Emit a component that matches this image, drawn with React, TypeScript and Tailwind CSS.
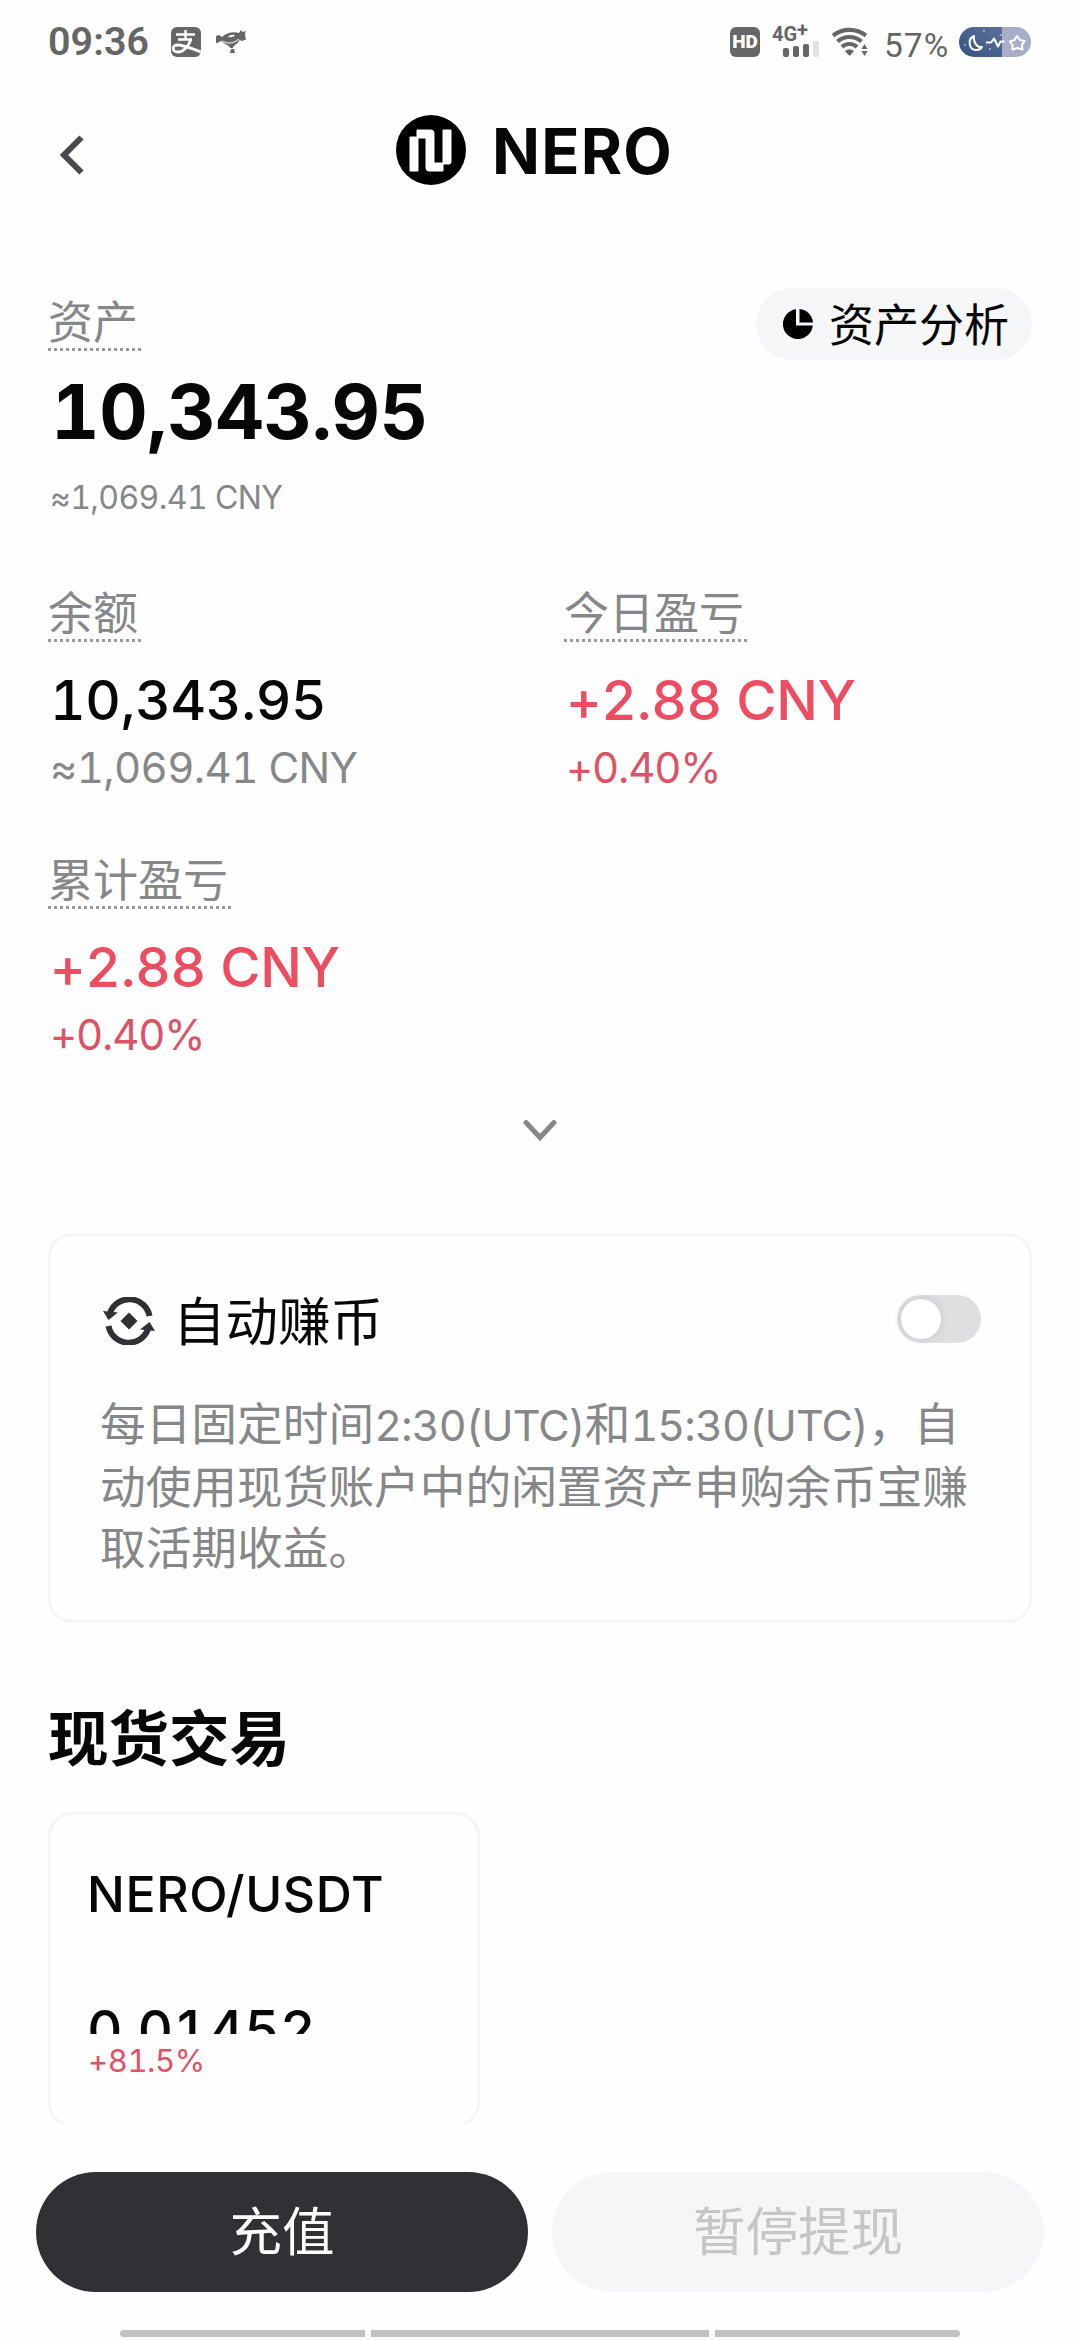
import { ReactNode } from 'react';

const statusGray = '#666666';

const AlipayIcon = () => (
    <svg width="30" height="30" viewBox="0 0 30 30">
        <rect width="30" height="30" rx="6" fill={statusGray} />
        <g stroke="#fff" strokeWidth="2.400" fill="none">
            <path d="M5 7.500h19M14.500 3v9.500M7 12.500h14" />
            <path d="M20 12.500C17.500 19 12.500 25 7 25c-6 0-6.500-7-.5-7 6 0 13 3 23.500 7" strokeWidth="2.800" />
        </g>
    </svg>
);

const BirdIcon = () => (
    <svg width="30" height="24" viewBox="0 0 30 24" fill={statusGray}>
        <path d="M0 6l3-1 3 2c4-4 11-6 17-4l2-3 1.500 2 3-1-.5 4 1 4.500-4 1.500-2.500-1c-1 2.500-3 4-5 5.500l-2 2.500h-2l-2.500-2.500c-3-1.500-5-3-6.500-5l-2 1.500-4 1.500-1.500-3z" />
        <path d="M15 19h3l1 4h-5z" />
        <path d="M12 7c2-2 4-2.500 7-2-1 2-4 2.500-7 2z" fill="#fff" />
        <path d="M7 11c5 3.500 11 2.500 16-2" fill="none" stroke="#fff" />
    </svg>
);

const WifiIcon = () => (
    <svg width="36" height="30" viewBox="0 0 36 30" fill="none" stroke={statusGray} strokeWidth="4.200">
        <path d="M1 8.500C11 1 24 1 34 8.500" />
        <path d="M5.500 14.500c7-6 17-6 24 0" />
        <path d="M10 20c4-4 11-4 15 0" />
        <path d="M13 24q4.500-3.500 9 0L17.500 29z" fill={statusGray} stroke="none" />
        <path d="M29.500 22l3-5 3 5zM29.500 24h6l-3 5z" fill={statusGray} stroke="none" />
    </svg>
);

const BatteryPill = () => (
    <svg width="72" height="30" viewBox="0 0 72 30">
        <defs>
            <linearGradient id="charged" x1="0" y1="1" x2="1" y2="0">
                <stop offset="0" stopColor="#34557f" />
                <stop offset="1" stopColor="#5f6f9b" />
            </linearGradient>
            <clipPath id="pill">
                <rect width="72" height="30" rx="15" />
            </clipPath>
        </defs>
        <g clipPath="url(#pill)">
            <rect width="43" height="30" fill="url(#charged)" />
            <rect x="43" width="29" height="30" fill="#a9aec8" />
        </g>
        <g fill="#a9bbd6">
            <circle cx="6" cy="18" r="1" />
            <circle cx="25" cy="4" r="1" />
            <circle cx="31" cy="22" r="1" />
            <circle cx="42" cy="8" r="1" />
            <circle cx="48" cy="26" r="1" />
        </g>
        <g stroke="#fff" strokeWidth="2" fill="none" strokeLinejoin="round">
            <path d="M15 9c-7 3-5 14 2 14 3 0 5-1 6-3-5 1-9-5-8-11z" />
            <path d="M27 15.500h5l3-4 4 8 2.500-5h4" />
            <path d="M58 9l3 4 4.500 1-2.500 4 .5 4.500-5-1.500-5 1.500v-4.500l-2.500-3.500 4.500-1.500z" />
        </g>
    </svg>
);

const NeroLogo = () => (
    <svg width="70" height="70" viewBox="0 0 70 70">
        <circle cx="35" cy="35" r="35" fill="#000" />
        <path
            d="M14 22h7v-7h14q3 0 3 3v30h9V15h8v32q0 2-2 2h-6v7H33q-3 0-3-3V23h-8v33h-8z"
            fill="#fff"
            stroke="#fff"
            strokeLinejoin="round"
        />
    </svg>
);

const PieIcon = () => (
    <svg width="30" height="30" viewBox="0 0 30 30" fill="#000">
        <path d="M13 .2V16.500h16.800A15 15 0 1 1 13 .2z" />
        <path d="M16.500 0A15 15 0 0 1 30 13.500H16.500z" />
    </svg>
);

const AutoEarnIcon = () => (
    <svg width="52" height="48" viewBox="0 0 52 48">
        <g fill="none" stroke="#303135" strokeWidth="6">
            <path d="M46.500 19A20.500 20.500 0 0 0 7 16" />
            <path d="M5.500 29A20.500 20.500 0 0 0 45 32" />
        </g>
        <path d="M0 14l15 1.500L5.500 23zM52 34l-15-1.500L46.500 25z" fill="#303135" />
        <path d="M26 15.500l8.500 8.500-8.500 8.500-8.500-8.500z" fill="#303135" />
    </svg>
);

const StatusBar = () => (
    <div className="flex h-[84px] items-start justify-between pt-[27px] pr-[49px] pl-[48px] text-[#666666]">
        <div className="flex h-[30px] items-center">
            <span className="w-[123px] font-['Roboto'] text-[39.500px] font-semibold">09:36</span>
            <AlipayIcon />
            <span className="ml-[15px]">
                <BirdIcon />
            </span>
        </div>
        <div className="flex h-[30px] items-center">
            <span className="flex size-[30px] items-center justify-center rounded-[6px] bg-[#666666] font-['Roboto'] text-[19px] font-black text-white">
                HD
            </span>
            <div className="ml-[12px] flex h-[30px] w-[47px] flex-col justify-between">
                <span className="flex font-['Roboto'] text-[20px] leading-[15px] font-bold">
                    4G<span className="mt-[-4px]">+</span>
                </span>
                <div className="flex h-[13px] items-end justify-end gap-[4px]">
                    <i className="h-[9px] w-[6px] rounded-[2px] bg-[#666666]" />
                    <i className="h-[11px] w-[6px] rounded-[2px] bg-[#666666]" />
                    <i className="h-[13px] w-[6px] rounded-[2px] bg-[#666666]" />
                    <i className="h-[16px] w-[6px] rounded-[2px] bg-[#e2e2e2]" />
                </div>
            </div>
            <span className="ml-[13px]">
                <WifiIcon />
            </span>
            <span className="mt-[8px] ml-[16px] w-[75px] font-['Roboto'] text-[33.500px] tracking-[1px]">57%</span>
            <BatteryPill />
        </div>
    </div>
);

const Label = ({ children }: { children: ReactNode }) => (
    <div className="inline-flex flex-col pr-[3px] text-[45px] leading-[51px] text-[#858789]">
        <span>{children}</span>
        <i className="mr-[-3px] h-[3px] bg-[repeating-linear-gradient(90deg,#97999b_0_3px,transparent_3px_6px)]" />
    </div>
);

interface StatProps {
    label: string;
    value: string;
    sub: string;
    rising?: boolean;
}

const Stat = ({ label, value, sub, rising = false }: StatProps) => (
    <div className={`h-[267px] ${rising ? 'text-[#ee4c60]' : 'text-[#060807]'}`}>
        <Label>{label}</Label>
        <div className="mt-[22px] ml-[2px] text-[55px] leading-[72px] font-medium tracking-[-0.300px] whitespace-nowrap">
            {value}
        </div>
        <div
            className={`mt-[2px] ml-[2px] text-[42px] leading-[60px] whitespace-nowrap ${
                rising ? 'tracking-[-1.200px] text-[#de5266]' : 'tracking-[-0.600px] text-[#858789]'
            }`}
        >
            {sub}
        </div>
    </div>
);

const Time = ({ children }: { children: ReactNode }) => (
    <span className="text-[43px] tracking-[-0.900px]">{children}</span>
);

export default function App() {
    return (
        <div className="flex h-[2340px] w-[1080px] flex-col overflow-hidden bg-[#fefefe] font-['Inter','Noto_Sans_CJK_SC',sans-serif] text-[#060807] tabular-nums">
            <StatusBar />

            <header className="flex h-[132px] items-center pl-[59px]">
                <svg className="mt-[9px]" width="25" height="40" viewBox="0 0 25 40" fill="none" stroke="#48494d" strokeWidth="6">
                    <path d="M22.500 2.500L5 20l17.500 17.500" />
                </svg>
                <div className="ml-[312px] flex items-center">
                    <NeroLogo />
                    <h1 className="mt-[2px] ml-[26px] text-[63px] font-bold tracking-[1.200px]">NERO</h1>
                </div>
            </header>

            <section className="mt-[72px] flex items-start justify-between px-[48px]">
                <div className="pt-[9px]">
                    <Label>资产</Label>
                    <div className="mt-[16px] ml-[3px] text-[75px] leading-[90px] font-bold tracking-[-0.300px]">10,343.95</div>
                    <div className="mt-[22px] ml-[2px] text-[32px] leading-[38px] tracking-[-0.600px] text-[#858789]">
                        ≈1,069.41 CNY
                    </div>
                </div>
                <button className="flex h-[72px] w-[276px] items-center gap-[16px] rounded-full bg-[#f4f6f8] pl-[27px] text-[45px] whitespace-nowrap">
                    <PieIcon />
                    <span className="mt-[3px]">资产分析</span>
                </button>
            </section>

            <section className="mt-[71px] grid grid-cols-2 gap-x-[48px] px-[48px]">
                <Stat label="余额" value="10,343.95" sub="≈1,069.41 CNY" />
                <Stat label="今日盈亏" value="+2.88 CNY" sub="+0.40%" rising />
                <Stat label="累计盈亏" value="+2.88 CNY" sub="+0.40%" rising />
            </section>

            <svg
                className="mx-auto mt-[-3px]"
                width="34"
                height="24"
                viewBox="0 0 34 24"
                fill="none"
                stroke="#858789"
                strokeWidth="5"
                strokeLinecap="round"
            >
                <path d="M3 3.500l14 15 14-15" />
            </svg>

            <section className="mx-[48px] mt-[90px] h-[390px] shrink-0 rounded-[24px] border-[3px] border-[#f4f5f6] pt-[50px] pr-[48px] pl-[49px]">
                <div className="flex h-[72px] items-center">
                    <span className="mt-[-2px] ml-[3px]">
                        <AutoEarnIcon />
                    </span>
                    <span className="ml-[18px] text-[52.500px]">自动赚币</span>
                    <div className="mt-[-6px] ml-auto h-[48px] w-[84px] rounded-full bg-[#dedfe1] p-[4px]">
                        <div className="size-[40px] rounded-full bg-white shadow-[0_0_8px_rgba(0,0,0,0.12)]" />
                    </div>
                </div>
                <p className="mt-[36px] text-[45.700px] leading-[61.500px] whitespace-nowrap text-[#858789]">
                    每日固定时间<Time>2:30(UTC)</Time>和<Time>15:30(UTC)</Time>，自
                    <br />
                    动使用现货账户中的闲置资产申购余币宝赚
                    <br />
                    取活期收益。
                </p>
            </section>

            <h2 className="mt-[74px] ml-[48px] text-[60.500px] leading-[84px] font-bold">现货交易</h2>

            <div className="mt-[31px] h-[312px] overflow-hidden pl-[48px]">
                <div className="h-[315px] w-[432px] rounded-[24px] border-[3px] border-[#f4f5f6] pt-[47px] pl-[36px]">
                    <div className="text-[50px] leading-[64px] font-medium tracking-[0.600px]">NERO/USDT</div>
                    {/* the price row is shorter than its text, so the digits are cut */}
                    <div className="mt-[72px] h-[36px] overflow-hidden text-[55px] leading-[64px] font-medium">0.01452</div>
                    <div className="mt-[7px] ml-[1px] text-[31px] leading-[40px] tracking-[-0.400px] text-[#de5266]">+81.5%</div>
                </div>
            </div>

            <footer className="mt-[48px] flex gap-[24px] px-[36px] text-[52.500px]">
                <button className="h-[120px] flex-1 rounded-full bg-[#303135] text-white">充值</button>
                <button className="h-[120px] flex-1 rounded-full bg-[#f4f6f8] text-[#c4c6c8]">暂停提现</button>
            </footer>

            <div className="mt-[38px] flex h-[7px] gap-[6px] px-[120px]">
                <i className="w-[245px] rounded-l-full bg-[#c1c1c1]" />
                <i className="flex-1 bg-[#c1c1c1]" />
                <i className="w-[245px] rounded-r-full bg-[#c1c1c1]" />
            </div>
        </div>
    );
}
